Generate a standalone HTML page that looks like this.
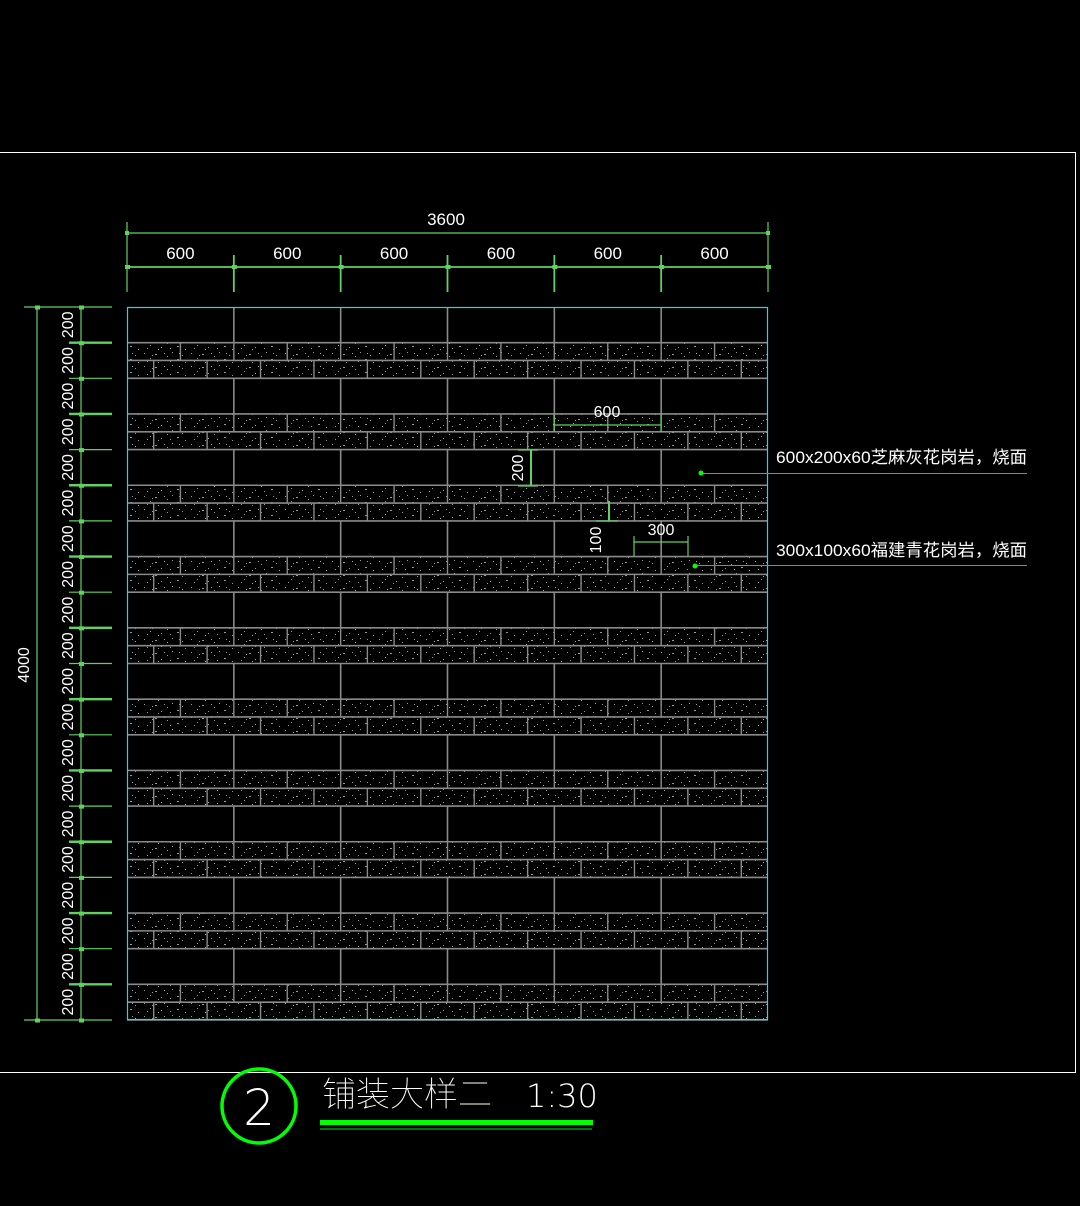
<!DOCTYPE html>
<html><head><meta charset="utf-8"><style>
html,body{margin:0;padding:0;background:#000;width:1080px;height:1206px;overflow:hidden}
svg{display:block}
text{font-family:"Liberation Sans","Noto Sans CJK SC",sans-serif;fill:#fff}
</style></head><body>
<svg id="s" width="1080" height="1206" viewBox="0 0 1080 1206" xmlns="http://www.w3.org/2000/svg">
<defs>
<pattern id="sp" width="47" height="13" patternUnits="userSpaceOnUse">
<g fill="#9a9a9a">
<rect x="3" y="2" width="1" height="1"/><rect x="9" y="7" width="1" height="1"/><rect x="14" y="3" width="2" height="1"/><rect x="20" y="9" width="1" height="1"/><rect x="26" y="5" width="1" height="1"/><rect x="31" y="1" width="1" height="1"/><rect x="36" y="8" width="2" height="1"/><rect x="41" y="4" width="1" height="1"/><rect x="6" y="10" width="1" height="1"/><rect x="17" y="11" width="1" height="1"/><rect x="29" y="10" width="1" height="1"/><rect x="44" y="11" width="1" height="1"/><rect x="23" y="2" width="1" height="1"/><rect x="11" y="4" width="1" height="1"/><rect x="38" y="2" width="1" height="1"/>
</g></pattern>
</defs>
<g id="g"></g>
<!-- frame -->
<path d="M0 152.5H1075.5V1072.5H0" stroke="#fff" stroke-width="1" fill="none"/>
<!-- top dims -->
<text x="446" y="225" font-size="17" text-anchor="middle">3600</text>
<g id="top"></g>
<!-- annotations -->
<text x="776" y="463" font-size="17" textLength="251" lengthAdjust="spacingAndGlyphs">600x200x60芝麻灰花岗岩，烧面</text>
<line x1="700" y1="473.5" x2="1027" y2="473.5" stroke="#00e020" stroke-width="1"/>
<circle cx="701" cy="473" r="2.5" fill="#00ff00"/>
<text x="776" y="556" font-size="17" textLength="251" lengthAdjust="spacingAndGlyphs">300x100x60福建青花岗岩，烧面</text>
<line x1="694" y1="565.5" x2="1027" y2="565.5" stroke="#00e020" stroke-width="1"/>
<circle cx="695" cy="566" r="2.5" fill="#00ff00"/>
<!-- inner dims -->
<g stroke="#5fd35f" stroke-width="1.2" fill="none">
<line x1="554" y1="425" x2="661" y2="425"/><line x1="554" y1="414" x2="554" y2="432"/><line x1="661" y1="414" x2="661" y2="432"/>
<line x1="531" y1="450" x2="531" y2="486" stroke-width="2"/><line x1="518" y1="450" x2="538" y2="450"/><line x1="518" y1="486" x2="538" y2="486"/>
<line x1="609" y1="501" x2="609" y2="521" stroke-width="2"/><line x1="596" y1="521" x2="618" y2="521"/>
<line x1="634" y1="542" x2="688" y2="542"/><line x1="634" y1="536" x2="634" y2="556"/><line x1="688" y1="536" x2="688" y2="556"/>
</g>
<text x="607" y="417" font-size="16" text-anchor="middle">600</text>
<text x="661" y="535" font-size="16" text-anchor="middle">300</text>
<text transform="translate(523,468) rotate(-90)" font-size="16" text-anchor="middle">200</text>
<text transform="translate(601,540) rotate(-90)" font-size="16" text-anchor="middle">100</text>
<!-- title -->
<circle cx="259" cy="1106" r="37" stroke="#00ff00" stroke-width="3.5" fill="none"/>
<text x="259" y="1125" font-size="50" text-anchor="middle" font-weight="100" style="font-family:'DejaVu Sans',sans-serif;font-weight:200">2</text>
<text x="322" y="1106" font-size="34" font-weight="100" style="font-family:'Noto Sans CJK SC',sans-serif;font-weight:100">铺装大样二</text>
<text x="526" y="1107" font-size="32" style="font-family:'DejaVu Sans',sans-serif;font-weight:200">1:30</text>
<rect x="320" y="1120" width="273" height="5" fill="#00ff00"/>
<rect x="320" y="1128.5" width="272" height="1" fill="#00e020"/>
</svg>
<script>
var NS="http://www.w3.org/2000/svg",g=document.getElementById('g'),t=document.getElementById('top');
function el(p,tag,a,txt){var e=document.createElementNS(NS,tag);for(var k in a)e.setAttribute(k,a[k]);if(txt)e.textContent=txt;p.appendChild(e);return e;}
var X0=127,X1=768,Y0=307,Y1=1020,W=(X1-X0)/6,H=(Y1-Y0)/20;
// speckle fill for small rows
for(var p=0;p<10;p++){var y=Y0+p*2*H;
 el(g,'rect',{x:X0,y:y+H,width:X1-X0,height:H,fill:'url(#sp)'});
 // horizontals
 [y+H,y+1.5*H,y+2*H].forEach(function(yy){el(g,'line',{x1:X0,y1:yy,x2:X1,y2:yy,stroke:'#8a8a8a','stroke-width':1.6});});
 for(var i=1;i<6;i++){var x=X0+i*W;el(g,'line',{x1:x,y1:y,x2:x,y2:y+H,stroke:'#8a8a8a','stroke-width':1.6});}
 for(var i=1;i<12;i++){var x=X0+i*W/2;el(g,'line',{x1:x,y1:y+H,x2:x,y2:y+1.5*H,stroke:'#8a8a8a','stroke-width':1.4});}
 for(var i=0;i<12;i++){var x=X0+W/4+i*W/2;el(g,'line',{x1:x,y1:y+1.5*H,x2:x,y2:y+2*H,stroke:'#8a8a8a','stroke-width':1.4});}
}
el(g,'rect',{x:X0+0.5,y:Y0+0.5,width:X1-X0-1,height:Y1-Y0-1,fill:'none',stroke:'#22d8e8','stroke-width':1.2});
// left dims
var c='#5fd35f';
el(g,'line',{x1:37,y1:Y0,x2:37,y2:Y1,stroke:c,'stroke-width':1.2});
el(g,'line',{x1:81,y1:Y0,x2:81,y2:Y1,stroke:c,'stroke-width':1.2});
el(g,'line',{x1:24,y1:Y0,x2:112,y2:Y0,stroke:c,'stroke-width':1.2});
el(g,'line',{x1:24,y1:Y1,x2:112,y2:Y1,stroke:c,'stroke-width':1.2});
for(var j=0;j<=20;j++){var yy=Y0+j*H;
 if(j>0&&j<20)el(g,'line',{x1:69,y1:yy,x2:112,y2:yy,stroke:c,'stroke-width':j%2?2.4:1.2});
 el(g,'rect',{x:79,y:yy-1.5,width:5,height:4,fill:c});
 if(j<20)el(g,'text',{transform:'translate(73,'+(yy+H/2)+') rotate(-90)','font-size':16,'text-anchor':'middle'},'200');
}
el(g,'rect',{x:35,y:Y0-1.5,width:5,height:4,fill:c});el(g,'rect',{x:35,y:Y1-1.5,width:5,height:4,fill:c});
el(g,'text',{transform:'translate(29,665) rotate(-90)','font-size':16,'text-anchor':'middle'},'4000');
// top dims
el(t,'line',{x1:X0,y1:233,x2:X1,y2:233,stroke:c,'stroke-width':1.2});
el(t,'line',{x1:X0,y1:267,x2:X1,y2:267,stroke:c,'stroke-width':1.8});
el(t,'line',{x1:X0,y1:222,x2:X0,y2:292,stroke:c,'stroke-width':1.2});
el(t,'line',{x1:X1,y1:222,x2:X1,y2:292,stroke:c,'stroke-width':1.2});
el(t,'rect',{x:X0-2,y:231,width:4,height:4,fill:c});el(t,'rect',{x:X1-2,y:231,width:4,height:4,fill:c});
for(var i=0;i<=6;i++){var x=X0+i*W;
 if(i>0&&i<6)el(t,'line',{x1:x,y1:255,x2:x,y2:292,stroke:c,'stroke-width':1.8});
 el(t,'rect',{x:x-2,y:265,width:5,height:4,fill:c});
 if(i<6)el(t,'text',{x:x+W/2,y:259,'font-size':17,'text-anchor':'middle'},'600');
}
</script>
</body></html>
